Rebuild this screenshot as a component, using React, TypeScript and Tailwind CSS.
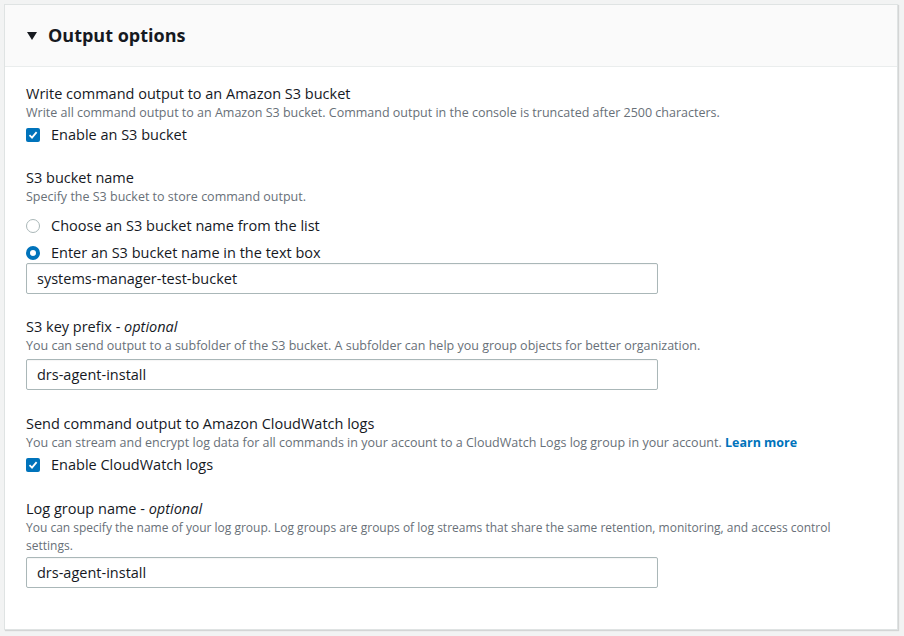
import React from "react";

const font = { fontFamily: '"Open Sans", "Liberation Sans", sans-serif' };

function Checkbox({ label }: { label: string }) {
    return (
        <div className="flex items-center h-5 gap-[11px]">
            <span className="w-[14px] h-[14px] rounded-[2px] bg-[#0073bb] flex items-center justify-center">
                <svg width="10" height="10" viewBox="0 0 10 10">
                    <path d="M1.5 5.2 L4 7.6 L8.6 2.2" fill="none" stroke="#fff" strokeWidth="1.8" />
                </svg>
            </span>
            <span className="text-[14.5px] text-[#16191f]">{label}</span>
        </div>
    );
}

function Radio({ label, checked }: { label: string; checked?: boolean }) {
    return (
        <div className="flex items-center h-5 gap-[11px]">
            {checked ? (
                <span className="w-[14px] h-[14px] rounded-full border-[4px] border-[#0073bb] bg-white" />
            ) : (
                <span className="w-[14px] h-[14px] rounded-full border border-[#aab7b8] bg-white" />
            )}
            <span className="text-[14.5px] text-[#16191f]">{label}</span>
        </div>
    );
}

function TextBox({ value }: { value: string }) {
    return (
        <div className="w-[632px] h-[31px] border border-[#aab7b8] rounded-[2px] bg-white flex items-center px-[10px] text-[14.5px] text-[#16191f] shadow-[inset_0_1px_1px_rgba(0,0,0,0.04)]">
            {value}
        </div>
    );
}

function Label({ children }: { children: React.ReactNode }) {
    return <div className="text-[14.5px] leading-5 text-[#16191f]">{children}</div>;
}

function Desc({ children }: { children: React.ReactNode }) {
    return <div className="text-[12.5px] leading-[17px] text-[#687078]">{children}</div>;
}

export default function App() {
    return (
        <div className="w-[904px] h-[636px] bg-[#f2f3f3] pt-[4px] pl-[4px]" style={font}>
            <div className="w-[894px] h-[626px] bg-white border border-[#dfe3e3] shadow-[1px_1px_1px_rgba(0,0,0,0.12)] flex flex-col">
                <div className="h-[62px] bg-[#fafafa] border-b border-[#eaeded] flex items-center pl-[22px] gap-[11px]">
                    <svg width="10" height="8" viewBox="0 0 10 8">
                        <path d="M0 0 H10 L5 8 Z" fill="#16191f" />
                    </svg>
                    <span className="text-[18px] font-bold text-[#16191f]">Output options</span>
                </div>

                <div className="flex flex-col pl-[21px] pt-[17px]">
                    <Label>Write command output to an Amazon S3 bucket</Label>
                    <Desc>
                        Write all command output to an Amazon S3 bucket. Command output in the console is
                        truncated after 2500 characters.
                    </Desc>
                    <div className="mt-[4px]">
                        <Checkbox label="Enable an S3 bucket" />
                    </div>

                    <div className="mt-[23px]">
                        <Label>S3 bucket name</Label>
                    </div>
                    <Desc>Specify the S3 bucket to store command output.</Desc>
                    <div className="mt-[11px] flex flex-col gap-[7px]">
                        <Radio label="Choose an S3 bucket name from the list" />
                        <Radio label="Enter an S3 bucket name in the text box" checked />
                    </div>
                    <TextBox value="systems-manager-test-bucket" />

                    <div className="mt-[23px]">
                        <Label>
                            S3 key prefix - <i>optional</i>
                        </Label>
                    </div>
                    <Desc>
                        You can send output to a subfolder of the S3 bucket. A subfolder can help you group
                        objects for better organization.
                    </Desc>
                    <div className="mt-[5px]">
                        <TextBox value="drs-agent-install" />
                    </div>

                    <div className="mt-[24px]">
                        <Label>Send command output to Amazon CloudWatch logs</Label>
                    </div>
                    <Desc>
                        You can stream and encrypt log data for all commands in your account to a CloudWatch
                        Logs log group in your account.{" "}
                        <span className="font-bold text-[#0073bb]">Learn more</span>
                    </Desc>
                    <div className="mt-[4px]">
                        <Checkbox label="Enable CloudWatch logs" />
                    </div>

                    <div className="mt-[24px]">
                        <Label>
                            Log group name - <i>optional</i>
                        </Label>
                    </div>
                    <div className="w-[850px] text-[12px] leading-[18px] text-[#687078]">
                        You can specify the name of your log group. Log groups are groups of log streams that
                        share the same retention, monitoring, and access control settings.
                    </div>
                    <div className="mt-[2px]">
                        <TextBox value="drs-agent-install" />
                    </div>
                </div>
            </div>
        </div>
    );
}
